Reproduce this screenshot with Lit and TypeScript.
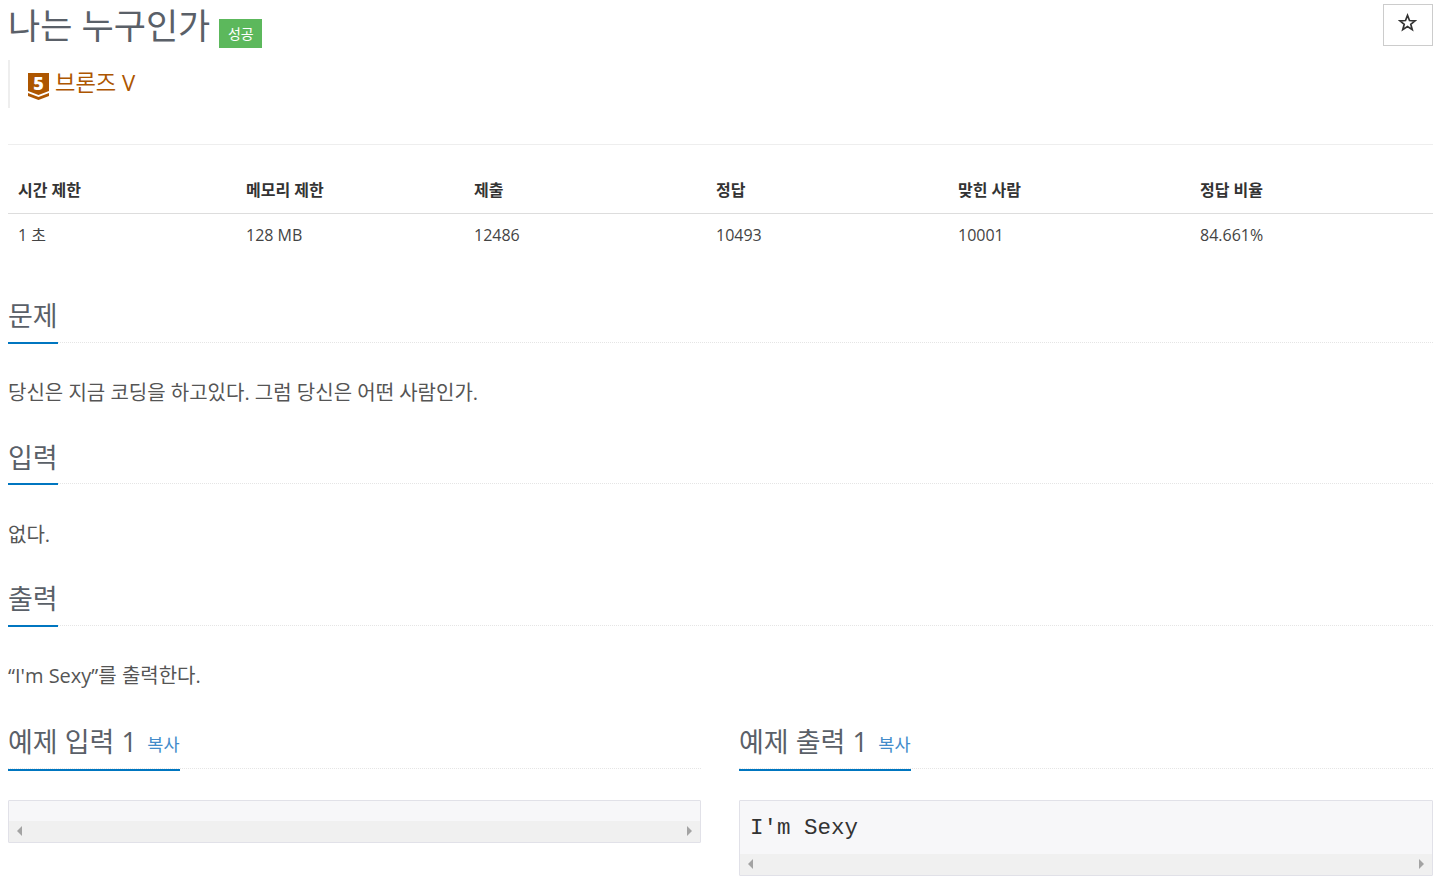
import { LitElement, html, css } from 'lit';
import { customElement } from 'lit/decorators.js';

const stats = [
  { label: '시간 제한', value: '1 초' },
  { label: '메모리 제한', value: '128 MB' },
  { label: '제출', value: '12486' },
  { label: '정답', value: '10493' },
  { label: '맞힌 사람', value: '10001' },
  { label: '정답 비율', value: '84.661%' },
];

const sections = [
  { title: '문제', body: '당신은 지금 코딩을 하고있다. 그럼 당신은 어떤 사람인가.' },
  { title: '입력', body: '없다.' },
  { title: '출력', body: '“I\'m Sexy”를 출력한다.' },
];

@customElement('app-root')
export class AppRoot extends LitElement {
  static styles = css`
    :host {
      display: block;
      height: 881px;
      overflow: hidden;
      padding: 0 5px 0 8px;
      box-sizing: border-box;
      font-family: 'Open Sans', 'Noto Sans CJK KR', sans-serif;
      font-size: 18px;
      color: #555;
      background: #fff;
    }
    * {
      box-sizing: border-box;
      margin: 0;
      padding: 0;
    }
    .title-row {
      display: flex;
      justify-content: space-between;
      align-items: flex-start;
      height: 60px;
    }
    h1 {
      display: flex;
      align-items: flex-start;
      font-size: 35px;
      line-height: 52px;
      font-weight: 400;
      color: #5a6068;
    }
    .badge {
      margin: 19px 0 0 9px;
      width: 43px;
      height: 29px;
      background: #5cb85c;
      color: #fff;
      font-size: 14px;
      line-height: 29px;
      text-align: center;
    }
    .star {
      display: flex;
      align-items: center;
      justify-content: center;
      width: 50px;
      height: 42px;
      margin-top: 4px;
      padding: 0 1px 5px 0;
      border: 1px solid #ccc;
      background: #fff;
    }
    .tier {
      display: flex;
      align-items: flex-start;
      height: 48px;
      padding: 12px 0 0 18px;
      border-left: 2px solid #eee;
      color: #ad5600;
      font-size: 22.2px;
      line-height: 24px;
      gap: 5px;
    }
    .tier svg {
      margin-top: -2px;
      flex: none;
    }
    .tier span {
      margin-top: -1px;
    }
    .rule {
      height: 1px;
      margin-top: 36px;
      background: #eee;
    }
    .stats {
      display: grid;
      grid-template-columns: 228px 228px 242px 242px 242px 1fr;
      margin-top: 24px;
    }
    .stats .head {
      height: 45px;
      padding: 9px 10px 0;
      border-bottom: 1px solid #ddd;
      font-size: 16px;
      line-height: 24px;
      font-weight: 700;
      color: #333;
    }
    .stats .cell {
      height: 43px;
      padding: 9px 10px 0;
      font-size: 16px;
      line-height: 24px;
      color: #444;
    }
    .section-title {
      display: flex;
      height: 44px;
      border-bottom: 1px dotted #e5e5e5;
    }
    .section-title h2 {
      height: 45px;
      padding-top: 0.3px;
      font-size: 27px;
      line-height: 34px;
      font-weight: 400;
      color: #5a6068;
      border-bottom: 2px solid #0076c0;
      white-space: nowrap;
    }
    .copy {
      margin-left: 10.500px;
      font-size: 17.5px;
      font-weight: 400;
      color: #428bca;
      vertical-align: 1px;
    }
    section {
      height: 141.5px;
    }
    .sections {
      margin-top: 41.8px;
    }
    section p {
      margin-top: 37.3px;
      font-size: 20px;
      line-height: 26px;
      color: #555;
    }
    .samples {
      display: grid;
      grid-template-columns: 693px 694px;
      gap: 38px;
      margin-top: 2.7px;
    }
    .samples .section-title {
      height: 43px;
    }
    .samples .section-title h2 {
      line-height: 32px;
    }
    pre {
      margin-top: 31px;
      border: 1px solid #e1e1e8;
      background: #f7f7f9;
      border-radius: 1px;
    }
    code {
      display: block;
      height: 53px;
      padding: 11px 10px 0;
      font-family: 'Liberation Mono', monospace;
      font-size: 22.5px;
      line-height: 32px;
      color: #333;
    }
    code.empty {
      height: 20px;
      padding: 0;
    }
    .scrollbar {
      display: flex;
      justify-content: space-between;
      align-items: center;
      height: 21px;
      padding: 0 8px;
      background: #f0f0f0;
    }
    .arrow-left {
      border-style: solid;
      border-width: 5px 5px 5px 0;
      border-color: transparent #a3a3a3 transparent transparent;
    }
    .arrow-right {
      border-style: solid;
      border-width: 5px 0 5px 5px;
      border-color: transparent transparent transparent #a3a3a3;
    }
  `;

  private sample(title: string, text: string) {
    return html`<div>
      <div class="section-title">
        <h2>${title}<span class="copy">복사</span></h2>
      </div>
      <pre><code class=${text ? '' : 'empty'}>${text}</code><div class="scrollbar"><span class="arrow-left"></span><span class="arrow-right"></span></div></pre>
    </div>`;
  }

  render() {
    return html`
      <div class="title-row">
        <h1>나는 누구인가<span class="badge">성공</span></h1>
        <button class="star" aria-label="star">
          <svg width="19" height="19" viewBox="0 0 18 18">
            <path d="M9 2.200l1.900 4.900 5.300.3-4.100 3.300 1.400 5.100L9 12.900l-4.500 2.900 1.400-5.100-4.100-3.300 5.300-.3z" fill="none" stroke="#333" stroke-width="1.6" />
          </svg>
        </button>
      </div>
      <div class="tier">
        <svg width="22" height="31" viewBox="0 -3 22 31">
          <path d="M0 0h21v18l-10.500 4L0 18z" fill="#ad5600" />
          <path d="M0 20l10.500 4L21 20v3l-10.500 4L0 23z" fill="#ad5600" />
          <text x="10.500" y="17" text-anchor="middle" font-family="Open Sans, sans-serif" font-size="18" font-weight="800" fill="#fff">5</text>
        </svg>
        <span>브론즈 V</span>
      </div>
      <div class="rule"></div>
      <div class="stats">
        ${stats.map(s => html`<div class="head">${s.label}</div>`)}
        ${stats.map(s => html`<div class="cell">${s.value}</div>`)}
      </div>
      <div class="sections">
        ${sections.map(
          s => html`<section>
            <div class="section-title"><h2>${s.title}</h2></div>
            <p>${s.body}</p>
          </section>`
        )}
      </div>
      <div class="samples">
        ${this.sample('예제 입력 1', '')}
        ${this.sample('예제 출력 1', "I'm Sexy")}
      </div>
    `;
  }
}
